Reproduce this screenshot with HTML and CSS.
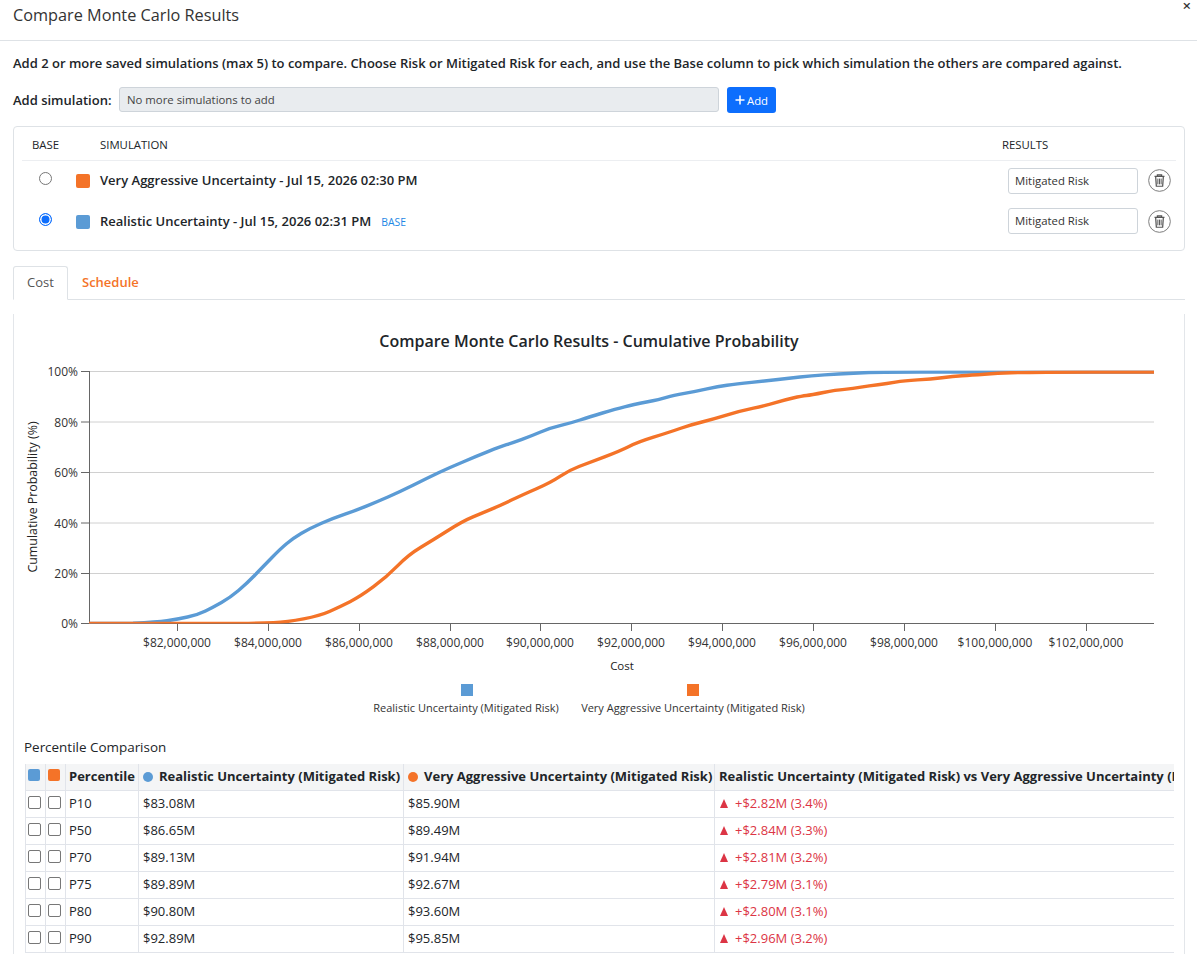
FILE: index.html
```html
<!DOCTYPE html>
<html lang="en">
<head>
<meta charset="utf-8">
<title>Compare Monte Carlo Results</title>
<link rel="stylesheet" href="styles.css">
</head>
<body>
<div class="modal">
  <header class="modal-head">
    <h1 class="modal-title">Compare Monte Carlo Results</h1>
    <span class="close">×</span>
  </header>
  <div class="modal-body">
    <p class="intro">Add 2 or more saved simulations (max 5) to compare. Choose Risk or Mitigated Risk for each, and use the Base column to pick which simulation the others are compared against.</p>
    <div class="add-row">
      <span class="add-label">Add simulation:</span>
      <div class="add-select">No more simulations to add</div>
      <button class="add-btn"><svg class="plus" viewBox="0 0 10 10"><path d="M5 .5v9M.5 5h9"/></svg>Add</button>
    </div>
    <section class="sim-card">
      <div class="sim-head">
        <span class="col-base">BASE</span>
        <span class="col-name">SIMULATION</span>
        <span class="col-results">RESULTS</span>
      </div>
      <div class="sim-row">
        <span class="col-base"><span class="radio"></span></span>
        <span class="swatch orange"></span>
        <span class="sim-name">Very Aggressive Uncertainty - Jul 15, 2026 02:30 PM</span>
        <div class="result-select">Mitigated Risk</div>
        <span class="trash"><svg viewBox="0 0 24 24"><circle cx="12" cy="12" r="11.3" class="trash-ring"/><path class="trash-can" d="M6.8 7.8h10.4M9.8 7.6V6.2h4.4v1.4M8 8l.7 10h6.6l.7-10"/><path class="trash-bars" d="M10.3 10v6M12 10v6M13.7 10v6"/></svg></span>
      </div>
      <div class="sim-row">
        <span class="col-base"><span class="radio on"></span></span>
        <span class="swatch blue"></span>
        <span class="sim-name">Realistic Uncertainty - Jul 15, 2026 02:31 PM</span>
        <span class="base-tag">BASE</span>
        <div class="result-select">Mitigated Risk</div>
        <span class="trash"><svg viewBox="0 0 24 24"><circle cx="12" cy="12" r="11.3" class="trash-ring"/><path class="trash-can" d="M6.8 7.8h10.4M9.8 7.6V6.2h4.4v1.4M8 8l.7 10h6.6l.7-10"/><path class="trash-bars" d="M10.3 10v6M12 10v6M13.7 10v6"/></svg></span>
      </div>
    </section>
    <nav class="tabs">
      <span class="tab active">Cost</span>
      <span class="tab">Schedule</span>
    </nav>
    <section class="panel">
      <svg class="chart" viewBox="13 314 1171 416" width="1171" height="416">
        <defs><clipPath id="plot"><rect x="89" y="370.5" width="1065" height="253"/></clipPath></defs>
        <text class="c-title" x="589" y="347" text-anchor="middle">Compare Monte Carlo Results - Cumulative Probability</text>
        <g class="grid">
          <path d="M89 371.5H1154M89 422H1154M89 472.5H1154M89 523H1154M89 573.5H1154"/>
        </g>
        <g class="axis">
          <path d="M89.5 371V624M81 371.5H89M81 422H89M81 472.5H89M81 523H89M81 573.5H89M81 623.5H1154"/>
          <path d="M177.5 624v7M268.5 624v7M359.5 624v7M450.5 624v7M540.5 624v7M631.5 624v7M722.5 624v7M813.5 624v7M904.5 624v7M995.5 624v7M1086.5 624v7"/>
        </g>
        <g class="ticks-y" text-anchor="end">
          <text x="78" y="376">100%</text><text x="78" y="427">80%</text><text x="78" y="477">60%</text><text x="78" y="528">40%</text><text x="78" y="578">20%</text><text x="78" y="628">0%</text>
        </g>
        <g class="ticks-x" text-anchor="middle">
          <text x="177" y="647">$82,000,000</text><text x="268" y="647">$84,000,000</text><text x="359" y="647">$86,000,000</text><text x="450" y="647">$88,000,000</text><text x="540" y="647">$90,000,000</text><text x="631" y="647">$92,000,000</text><text x="722" y="647">$94,000,000</text><text x="813" y="647">$96,000,000</text><text x="904" y="647">$98,000,000</text><text x="995" y="647">$100,000,000</text><text x="1086" y="647">$102,000,000</text>
        </g>
        <text class="c-axis" x="622" y="670" text-anchor="middle">Cost</text>
        <text class="c-axis c-axis-y" transform="translate(37 497) rotate(-90)" text-anchor="middle">Cumulative Probability (%)</text>
        <g clip-path="url(#plot)">
          <path class="line l-blue" d="M89 623.5 L133 623.3 Q157 622.3 167 620.8 Q177 619.3 187.5 617 Q198 614.7 205.5 611 Q213 607.3 221.5 602.5 Q230 597.7 238.5 590.5 Q247 583.3 255 575 Q263 566.7 271.5 558 Q280 549.3 286.5 543.8 Q293 538.3 301.5 533.3 Q310 528.3 321.5 523.3 Q333 518.3 345 514.2 Q357 510 367 505.9 Q377 501.7 388.5 496.7 Q400 491.7 413.5 485 Q427 478.3 438.5 472.8 Q450 467.3 463.5 461.7 Q477 456 488.5 451.4 Q500 446.7 506.5 444.7 Q513 442.7 522 439.4 Q531 436 540 432.2 Q549 428.3 560 425.7 Q571 423 580 420 Q589 417 602.5 413 Q616 409 624.5 406.9 Q633 404.7 646.5 402 Q660 399.3 666.5 397.3 Q673 395.3 684.5 393.3 Q696 391.3 707 388.8 Q718 386.3 727 385.2 Q736 384 751.5 382.4 Q767 380.7 778 379.5 Q789 378.3 800 377 Q811 375.7 824.5 374.9 Q838 374 853.5 373.2 Q869 372.3 884.5 372.2 Q900 372 920 372 L1154 372"/>
          <path class="line l-orange" d="M89 623.5 L240 623.5 Q260 623.3 273.5 622.7 Q287 622 303.5 618.9 Q320 615.7 330 611.2 Q340 606.7 350 601.7 Q360 596.7 373.5 586.7 Q387 576.7 397.5 565.9 Q408 555 420.5 547.5 Q433 540 448 530.5 Q463 521 473 516.9 Q483 512.7 491.5 509.1 Q500 505.5 511 500.3 Q522 495 536.5 488.7 Q551 482.3 560 476.3 Q569 470.3 579 466.5 Q589 462.7 604.5 456.9 Q620 451 629 446.5 Q638 442 653.5 437.2 Q669 432.3 680 428.5 Q691 424.7 702 422 Q713 419.3 726.5 415.2 Q740 411 753.5 408.2 Q767 405.3 775.5 402.7 Q784 400 793 398 Q802 396 806.5 395.5 Q811 395 823.5 392.5 Q836 390 844.5 389.4 Q853 388.7 861 387.2 Q869 385.7 878 384.7 Q887 383.7 895.5 382.2 Q904 380.7 917.5 379.9 Q931 379 942 377.7 Q953 376.3 962 375.7 Q971 375 984.5 374.2 Q998 373.3 1011 372.8 Q1024 372.3 1046.5 372.2 Q1069 372 1090 372 L1154 372"/>
        </g>
        <rect class="fill-blue" x="461" y="684" width="12" height="12"/>
        <rect class="fill-orange" x="687" y="684" width="12" height="12"/>
        <g class="c-legend" text-anchor="middle">
          <text x="466" y="712">Realistic Uncertainty (Mitigated Risk)</text>
          <text x="693" y="712">Very Aggressive Uncertainty (Mitigated Risk)</text>
        </g>
      </svg>
      <h2 class="pc-title">Percentile Comparison</h2>
      <div class="table-wrap">
        <table class="pc-table">
          <colgroup><col class="w-check"><col class="w-check"><col class="w-pct"><col class="w-real"><col class="w-very"><col class="w-diff"></colgroup>
          <thead>
            <tr>
              <th class="check-cell"><span class="head-swatch blue"></span></th>
              <th class="check-cell"><span class="head-swatch orange"></span></th>
              <th class="pct">Percentile</th>
              <th><span class="dot blue"></span>Realistic Uncertainty (Mitigated Risk)</th>
              <th><span class="dot orange"></span>Very Aggressive Uncertainty (Mitigated Risk)</th>
              <th>Realistic Uncertainty (Mitigated Risk) vs Very Aggressive Uncertainty (Mitigated Risk)</th>
            </tr>
          </thead>
          <tbody>
            <tr><td class="check-cell"><span class="box"></span></td><td class="check-cell"><span class="box"></span></td><td class="pct">P10</td><td>$83.08M</td><td>$85.90M</td><td class="up"><span class="tri"></span>+$2.82M (3.4%)</td></tr>
            <tr><td class="check-cell"><span class="box"></span></td><td class="check-cell"><span class="box"></span></td><td class="pct">P50</td><td>$86.65M</td><td>$89.49M</td><td class="up"><span class="tri"></span>+$2.84M (3.3%)</td></tr>
            <tr><td class="check-cell"><span class="box"></span></td><td class="check-cell"><span class="box"></span></td><td class="pct">P70</td><td>$89.13M</td><td>$91.94M</td><td class="up"><span class="tri"></span>+$2.81M (3.2%)</td></tr>
            <tr><td class="check-cell"><span class="box"></span></td><td class="check-cell"><span class="box"></span></td><td class="pct">P75</td><td>$89.89M</td><td>$92.67M</td><td class="up"><span class="tri"></span>+$2.79M (3.1%)</td></tr>
            <tr><td class="check-cell"><span class="box"></span></td><td class="check-cell"><span class="box"></span></td><td class="pct">P80</td><td>$90.80M</td><td>$93.60M</td><td class="up"><span class="tri"></span>+$2.80M (3.1%)</td></tr>
            <tr><td class="check-cell"><span class="box"></span></td><td class="check-cell"><span class="box"></span></td><td class="pct">P90</td><td>$92.89M</td><td>$95.85M</td><td class="up"><span class="tri"></span>+$2.96M (3.2%)</td></tr>
          </tbody>
        </table>
      </div>
    </section>
  </div>
</div>
</body>
</html>
```

FILE: styles.css
```css
* { box-sizing: border-box; }
html, body { margin: 0; height: 954px; overflow: hidden; background: #fff; }
body { font-family: "Open Sans", "Noto Sans", sans-serif; color: #212529; font-size: 13px; }

.modal-head { height: 41px; border-bottom: 1px solid #dee2e6; padding: 5px 13px 0; position: relative; }
.modal-title { margin: 0; font-size: 16.25px; font-weight: 400; line-height: 21px; color: #333; }
.close { position: absolute; right: 6px; top: 0; height: 10px; font-size: 15px; line-height: 10px; font-weight: 600; color: #333; }

.modal-body { padding: 0 12px 0 13px; }
.intro { margin: 13px 0 0; font-size: 13px; font-weight: 600; line-height: 18px; color: #212529; white-space: nowrap; }

.add-row { display: flex; align-items: center; margin-top: 15px; height: 26px; }
.add-label { width: 106px; font-weight: 600; font-size: 13px; }
.add-select { width: 600px; height: 25px; margin-bottom: 1px; background: #e9ecef; border: 1px solid #ced4da; border-radius: 3px; font-size: 11.375px; line-height: 23px; padding-left: 7px; color: #444; }
.add-btn { margin-left: 8px; width: 49px; height: 26px; background: #0d6efd; border: 0; border-radius: 3px; color: #fff; font: 500 11.375px "Open Sans", sans-serif; padding: 0; display: flex; align-items: center; justify-content: center; gap: 2px; }
.plus { width: 10px; height: 10px; fill: none; stroke: #fff; stroke-width: 1.5; }

.sim-card { margin-top: 13px; width: 1172px; height: 125px; border: 1px solid #dee2e6; border-radius: 4px; padding: 0 8px; }
.sim-head { display: flex; align-items: center; height: 34px; padding-top: 2px; border-bottom: 1px solid #eceef1; font-size: 11.375px; font-weight: 500; color: #212529; }
.col-base { width: 46px; flex: none; text-align: center; }
.sim-head .col-base { width: 78px; text-align: left; padding-left: 10px; }
.col-name { flex: 1; }
.col-results { width: 174px; flex: none; }

.sim-row { display: flex; align-items: center; height: 41px; }
.sim-head + .sim-row { margin-top: -1px; }
.sim-row .col-base { display: flex; justify-content: center; padding-bottom: 5px; }
.radio { width: 13px; height: 13px; border-radius: 50%; border: 1px solid #777; background: #fff; display: block; }
.radio.on { border: 1.5px solid #0d6efd; background: #0d6efd; box-shadow: inset 0 0 0 1.5px #fff; }
.swatch { width: 14px; height: 14px; border-radius: 2px; margin-left: 8px; margin-right: 10px; flex: none; }
.blue { background: #5b9bd5; }
.orange { background: #f47328; }
.sim-name { font-size: 13px; font-weight: 600; color: #212529; padding-bottom: 2px; }
.base-tag { margin-left: 10px; font-size: 10.4px; font-weight: 500; color: #1e88e5; }
.result-select { margin-left: auto; width: 130px; height: 26px; margin-top: 1px; border: 1px solid #ced4da; border-radius: 3px; font-size: 11.375px; line-height: 24px; padding-left: 6px; color: #333; }
.sim-row + .sim-row .result-select { margin-top: 0; margin-bottom: 1px; }
.trash { width: 23px; height: 23px; margin-left: 10px; margin-right: 5px; flex: none; display: block; }
.trash svg { display: block; width: 23px; height: 23px; }
.trash-ring { fill: none; stroke: #777; stroke-width: 1; }
.trash-can { fill: none; stroke: #555; stroke-width: 1.3; }
.trash-bars { fill: none; stroke: #555; stroke-width: 1; }

.tabs { display: flex; margin-top: 15px; height: 34px; width: 1172px; border-bottom: 1px solid #dee2e6; }
.tab { height: 34px; padding: 0 13px; line-height: 30px; font-size: 13px; font-weight: 600; color: #f47328; border: 1px solid transparent; }
.tab.active { width: 55px; padding: 0; text-align: center; color: #555; font-weight: 500; background: #fff; border-color: #dee2e6; border-bottom: 1px solid #fff; border-radius: 3px 3px 0 0; }

.panel { width: 1172px; height: 660px; border-left: 1px solid #e3e6ea; border-right: 1px solid #e3e6ea; margin-top: 14px; }
.chart { display: block; margin-left: -1px; }
.chart text { font-family: "Open Sans", "Noto Sans", sans-serif; }
.c-title { font-size: 16px; font-weight: 600; fill: #212529; }
.grid path { stroke: #d0d0d0; stroke-width: 1; fill: none; }
.axis path { stroke: #666; stroke-width: 1; fill: none; }
.ticks-y text, .ticks-x text { font-size: 12px; fill: #333; }
.c-axis { font-size: 11.5px; font-weight: 500; fill: #222; }
.c-axis-y { font-size: 12.4px; }
.c-legend text { font-size: 11px; fill: #333; }
.line { fill: none; stroke-width: 3.4; stroke-linejoin: round; stroke-linecap: round; }
.l-blue { stroke: #5b9bd5; }
.l-orange { stroke: #f47328; }
.fill-blue { fill: #5b9bd5; }
.fill-orange { fill: #f47328; }

.pc-title { margin: 9px 0 0 10px; font-size: 13.45px; font-weight: 500; line-height: 17px; color: #212529; }
.table-wrap { width: 1149px; margin: 8px 0 0 11px; overflow: hidden; }
.pc-table { border-collapse: collapse; table-layout: fixed; width: 1149px; white-space: nowrap; }
.w-check { width: 20px; }
.w-pct { width: 73px; }
.w-real { width: 265px; }
.w-very { width: 311px; }
.w-diff { width: 460px; }
.pc-table th, .pc-table td { height: 27px; padding: 0 4px 2px; border: 1px solid #e1e4ea; border-top: 0; font-size: 13px; text-align: left; vertical-align: middle; overflow: hidden; }
.pc-table th:last-child, .pc-table td:last-child { border-right: 0; }
.pc-table th { height: 26px; background: #f4f5f6; font-weight: 700; color: #212529; border-bottom: 1px solid #e1e4ea; }
.pc-table td { font-weight: 500; color: #212529; }
.pc-table .pct { padding-left: 3px; }
.pc-table .check-cell { padding: 0 0 3px 2px; }
.head-swatch { display: block; width: 12px; height: 12px; border-radius: 2px; }
.box { display: block; width: 13px; height: 13px; border: 1px solid #777; border-radius: 2px; background: #fff; }
.dot { display: inline-block; width: 10px; height: 10px; border-radius: 50%; margin-right: 6px; vertical-align: -1px; }
.pc-table td.up { color: #dc3545; font-weight: 400; }
.tri { display: inline-block; width: 0; height: 0; border-left: 4.5px solid transparent; border-right: 4.5px solid transparent; border-bottom: 9px solid #dc3545; margin-right: 7px; margin-left: 1px; }
```
